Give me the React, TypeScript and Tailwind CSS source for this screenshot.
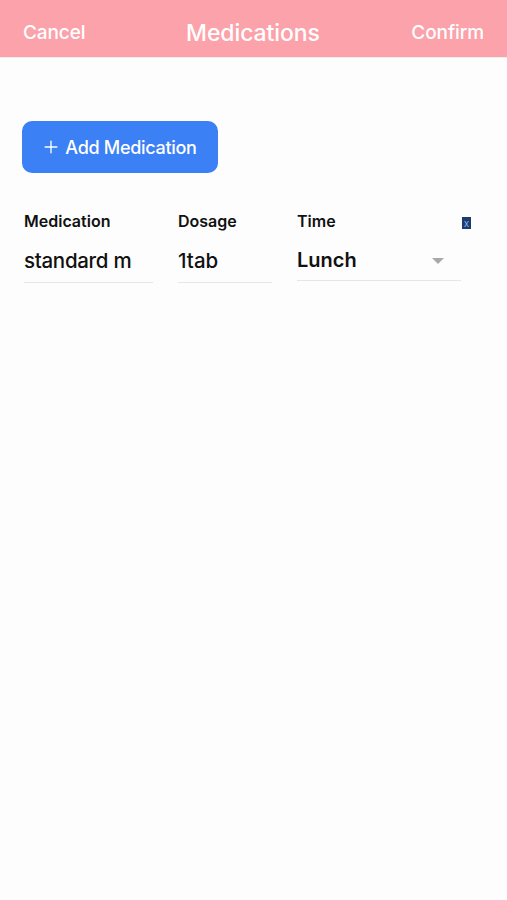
import { Plus } from 'lucide-react'

export default function App() {
  return (
    <div className="min-h-[900px] bg-[#fdfdfd] font-['Inter','Noto_Sans',sans-serif] text-[#111]">
      <header className="flex h-[58px] items-center justify-between border-b border-[#eee] bg-[#fca2aa] px-[23px] pt-[10px] text-white">
        <button className="text-[19px] font-medium tracking-[-0.1px]">Cancel</button>
        <h1 className="pl-[9px] pb-[1px] text-[23px] font-medium tracking-[-0.1px]">Medications</h1>
        <button className="text-[19px] font-medium tracking-[-0.1px]">Confirm</button>
      </header>

      <div className="px-[22px] pt-[63px]">
        <button className="flex h-[52px] w-[196px] items-center justify-center gap-[4px] rounded-[10px] bg-[#3c80f6] pr-[2px] text-[18px] font-medium tracking-[-0.3px] text-white">
          <Plus size={20} strokeWidth={1.6} />
          Add Medication
        </button>

        <div className="mt-[36px] flex pl-[2px]">
          <div className="w-[129px]">
            <div className="text-[16px] font-semibold">Medication</div>
            <div className="mt-[13px] whitespace-nowrap border-b border-[#e6e6e6] pb-[5px] text-[20.5px] font-medium tracking-[-0.3px]">
              standard m
            </div>
          </div>
          <div className="ml-[25px] w-[94px]">
            <div className="text-[16px] font-semibold">Dosage</div>
            <div className="mt-[13px] border-b border-[#e6e6e6] pb-[5px] text-[20.5px] font-medium">
              1tab
            </div>
          </div>
          <div className="ml-[25px] w-[164px]">
            <div className="text-[16px] font-semibold">Time</div>
            <div className="mt-[12px] flex items-center justify-between border-b border-[#e6e6e6] pb-[5px] pr-[17px]">
              <span className="text-[20px] font-semibold">Lunch</span>
              <span className="mt-[2px] h-0 w-0 border-x-[6px] border-t-[6px] border-x-transparent border-t-[#a9a9a9]" />
            </div>
          </div>
          <div className="ml-[1px] mt-[8px]">
            <span className="flex h-[12px] w-[9px] items-center justify-center bg-[#1d3b6b] text-[10px] leading-none text-[#7fb2ff]">
              x
            </span>
          </div>
        </div>
      </div>
    </div>
  )
}
